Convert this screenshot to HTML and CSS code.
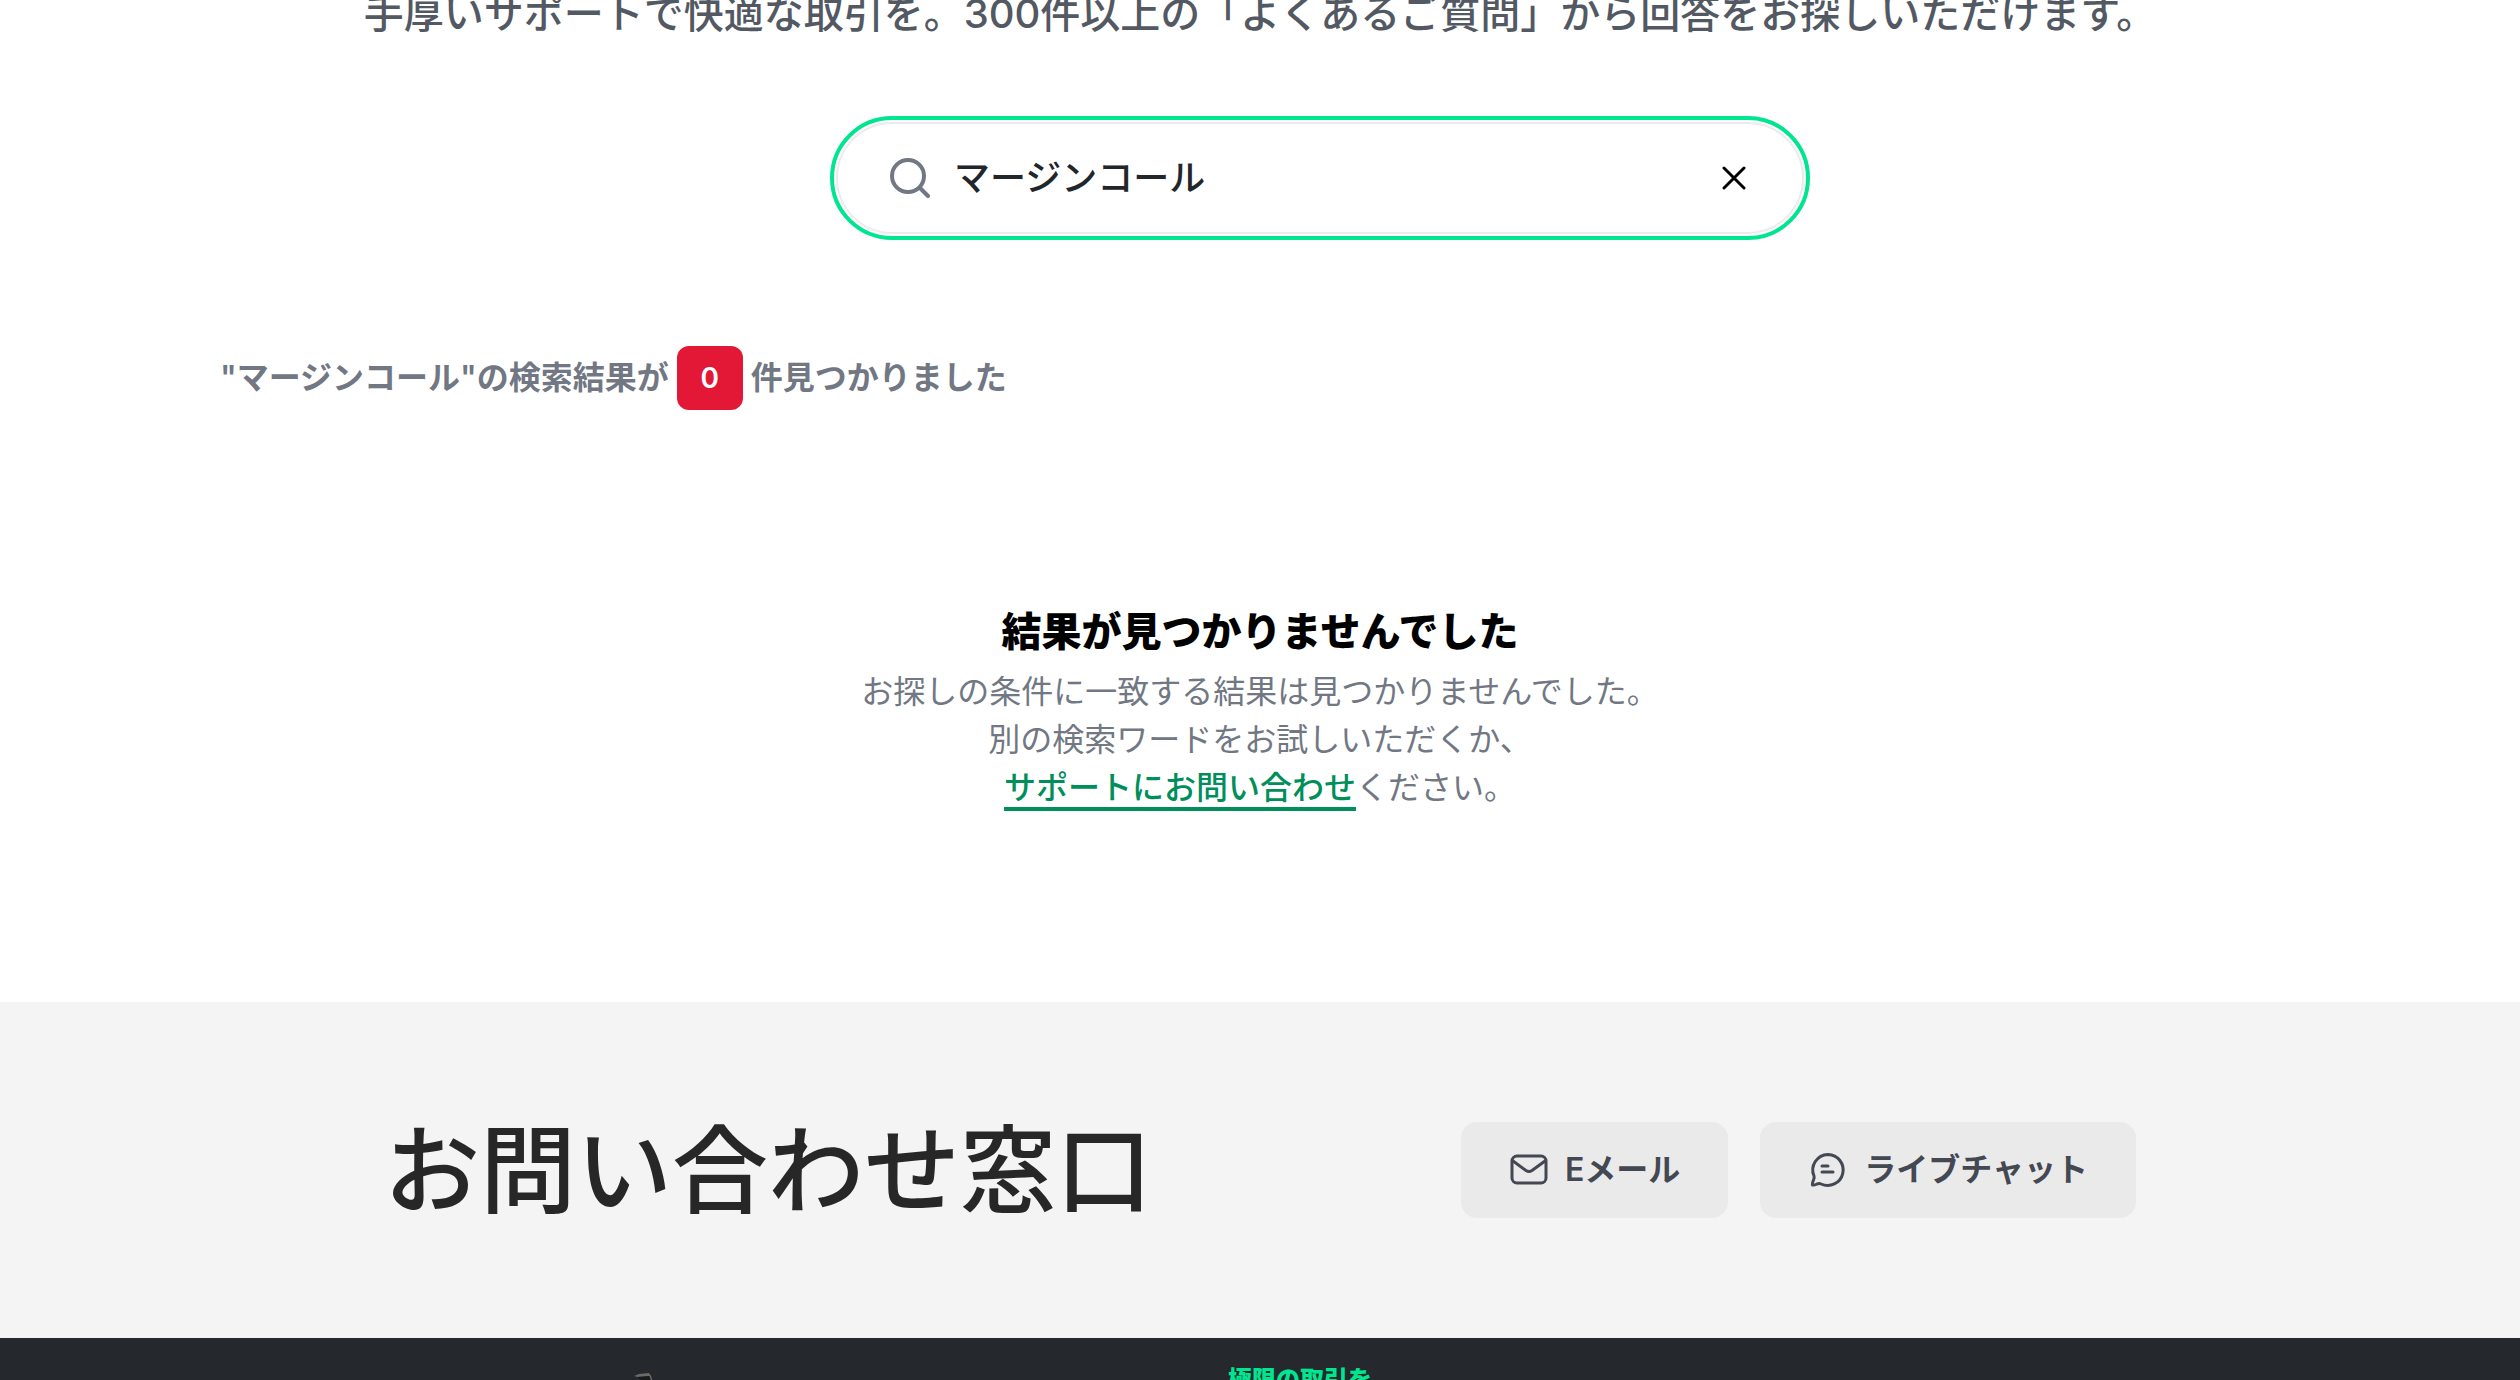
FILE: index.html
```html
<!DOCTYPE html>
<html lang="ja">
<head>
<meta charset="utf-8">
<meta name="viewport" content="width=device-width, initial-scale=1">
<title>ヘルプセンター</title>
<link rel="stylesheet" href="styles.css">
</head>
<body>
<main class="help">
  <p class="lead">手厚いサポートで快適な取引を。300件以上の「よくあるご質問」から回答をお探しいただけます。</p>
  <div class="search-row">
    <form class="search" role="search">
      <svg class="search-icon" viewBox="0 0 40 40" aria-hidden="true"><circle cx="18" cy="18" r="16"/><path d="M30 30l8 8"/></svg>
      <input class="search-input" type="text" aria-label="検索" value="マージンコール">
      <button class="search-clear" type="button" aria-label="クリア"><svg viewBox="0 0 24 24" aria-hidden="true"><path d="M2 2l20 20M22 2L2 22"/></svg></button>
    </form>
  </div>
  <p class="count"><span>"マージンコール"の検索結果が</span><span class="badge">0</span><span>件見つかりました</span></p>
  <section class="empty">
    <h2 class="empty-title">結果が見つかりませんでした</h2>
    <p class="empty-text">お探しの条件に一致する結果は見つかりませんでした。<br>別の検索ワードをお試しいただくか、<br><a class="link" href="#contact">サポートにお問い合わせ</a>ください。</p>
  </section>
</main>
<section class="contact" id="contact">
  <div class="contact-inner">
    <h2 class="contact-title">お問い合わせ窓口</h2>
    <div class="actions">
      <button class="action" type="button"><svg viewBox="0 0 40 40" aria-hidden="true"><rect x="3" y="6" width="34" height="27" rx="5"/><path d="M4 11l13 9.500q3 2 6 0L36 11"/></svg>Eメール</button>
      <button class="action" type="button"><svg viewBox="0 0 40 40" aria-hidden="true"><path d="M20 4.500A15.500 15.500 0 1 1 13 34Q11.500 33 9 34Q6 35.500 4.500 35Q4 34 5.500 30Q6.500 27.500 6 26A15.500 15.500 0 0 1 20 4.500Z"/><path d="M14 16h6M14 22h11"/></svg>ライブチャット</button>
    </div>
  </div>
</section>
<footer class="footer">
  <div class="footer-inner">
    <svg class="figure" viewBox="0 0 20 12" aria-hidden="true"><path fill="#6b6a67" d="M0 4L5 2L15 1L17 4L4 5Z"/><path fill="#191b1d" d="M4 5L16 4L17 12H9Z"/><path fill="#77756f" d="M15 3L17 4L19 12H18L16 5Z"/></svg>
    <p class="tagline">極限の取引を</p>
  </div>
</footer>
</body>
</html>
```
FILE: styles.css
```css
* { box-sizing: border-box; }

body {
  display: flex;
  flex-direction: column;
  height: 100vh;
  margin: 0;
  overflow: hidden;
  background: #fff;
  color: #000;
  font-family: Inter, "Noto Sans CJK JP", sans-serif;
  font-size: 32px;
  line-height: 48px;
}

h2, p { margin: 0; }

svg {
  fill: none;
  stroke: currentColor;
  stroke-linecap: round;
  stroke-linejoin: round;
}

.help {
  flex: none;
  margin-top: -16px;
  padding: 0 220px 190px;
}

.lead {
  color: #535963;
  font-size: 40px;
  font-weight: 500;
  line-height: 60px;
  text-align: center;
}

.search-row {
  display: flex;
  justify-content: center;
  margin: 78px 0 112px;
  padding-left: 120px;
}

.search {
  display: flex;
  align-items: center;
  gap: 24px;
  width: 968px;
  max-width: 100%;
  height: 112px;
  padding: 0 52px;
  border: 2px solid #ebebeb;
  border-radius: 56px;
  outline: 4px solid #00e590;
  outline-offset: 2px;
}

.search-icon {
  flex: none;
  width: 40px;
  height: 40px;
  color: #717783;
  stroke-width: 4;
}

.search-input {
  flex: 1;
  min-width: 0;
  padding: 0;
  border: 0;
  outline: 0;
  background: transparent;
  color: #22262b;
  font: 500 36px/48px Inter, "Noto Sans CJK JP", sans-serif;
}

.search-clear {
  display: flex;
  padding: 4px;
  border: 0;
  background: transparent;
  color: #000;
}

.search-clear svg {
  width: 24px;
  height: 24px;
  stroke-width: 3;
}

.count {
  display: flex;
  align-items: center;
  gap: 8px;
  color: #717783;
  font-weight: 600;
}

.badge {
  min-width: 66px;
  padding: 8px 16px;
  border-radius: 12px;
  background: #e31837;
  color: #fff;
  font-size: 28px;
  text-align: center;
}

.empty {
  margin-top: 192px;
  text-align: center;
}

.empty-title {
  font-size: 40px;
  font-weight: 800;
  line-height: 60px;
}

.empty-text {
  margin-top: 6px;
  color: #717783;
}

.link {
  border-bottom: 4px solid #008f5a;
  color: #008f5a;
  font-weight: 500;
  text-decoration: none;
}

.contact {
  flex: none;
  padding: 120px 48px;
  background: #f4f4f4;
}

.contact-inner {
  display: flex;
  align-items: center;
  justify-content: space-between;
  max-width: 1752px;
  margin: 0 auto;
}

.contact-title {
  color: #272727;
  font-size: 96px;
  font-weight: 500;
  line-height: 96px;
}

.actions {
  display: flex;
  gap: 32px;
}

.action {
  display: flex;
  align-items: center;
  gap: 16px;
  height: 96px;
  padding: 0 48px;
  border: 0;
  border-radius: 16px;
  background: #eaeaea;
  color: #434852;
  font: 600 32px/48px Inter, "Noto Sans CJK JP", sans-serif;
}

.action svg {
  width: 40px;
  height: 40px;
  stroke-width: 3;
}

.footer {
  flex: 1 0 0;
  overflow: hidden;
  background: #25292e;
}

.footer-inner {
  display: grid;
  grid-template-columns: 594px 1fr;
  max-width: 1252px;
  margin: 0 auto;
  padding-top: 24px;
}

.figure {
  width: 20px;
  height: 12px;
  margin-top: 10px;
  stroke: none;
}

.tagline {
  color: #00e590;
  font-size: 24px;
  font-weight: 900;
  line-height: 36px;
}
```
